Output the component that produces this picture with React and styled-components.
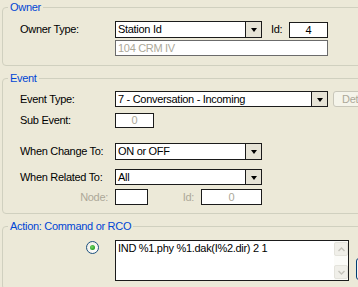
import React from 'react';
import styled, { createGlobalStyle } from 'styled-components';

const GlobalStyle = createGlobalStyle`
  html, body {
    margin: 0;
    padding: 0;
    background: #ece9d8;
  }
  body {
    font-family: 'Liberation Sans', Arial, sans-serif;
    font-size: 11px;
    letter-spacing: -0.3px;
    color: #000;
    overflow: hidden;
  }
`;

const Page = styled.div`
  width: 358px;
  height: 287px;
  overflow: hidden;
  box-sizing: border-box;
  padding: 1px 0 0 2px;
`;

const Group = styled.fieldset`
  width: 400px;
  min-width: 0;
  margin: ${(p) => p.$mt || 0}px 0 0 0;
  padding: 0;
  border: 1px solid #d0d0bf;
  border-radius: 4px;
  box-sizing: border-box;
`;

const Legend = styled.legend`
  margin-left: 5px;
  padding: 0 2px;
  line-height: 13px;
  color: #0046d5;
`;

const Body = styled.div`
  padding: ${(p) => p.$pt}px 0 ${(p) => p.$pb}px 17px;
`;

const Row = styled.div`
  display: flex;
  align-items: ${(p) => (p.$top ? 'flex-start' : 'center')};
  margin-top: ${(p) => p.$mt || 0}px;
`;

const Label = styled.span`
  flex: none;
  width: ${(p) => p.$w || 95}px;
  margin-left: ${(p) => p.$ml || 0}px;
  box-sizing: border-box;
  padding-right: ${(p) => (p.$right ? 7 : 0)}px;
  text-align: ${(p) => (p.$right ? 'right' : 'left')};
  line-height: 13px;
  color: ${(p) => (p.$disabled ? '#aca899' : '#000')};
  white-space: nowrap;
`;

const Combo = styled.div`
  flex: none;
  display: flex;
  width: ${(p) => p.$w}px;
  height: ${(p) => p.$h || 16}px;
  box-sizing: border-box;
  border: 1px solid #1b1b1b;
  background: #fff;
`;

const ComboText = styled.span`
  flex: 1;
  padding-left: 2px;
  line-height: ${(p) => p.$lh || 14}px;
  white-space: nowrap;
  overflow: hidden;
`;

const ComboArrow = styled.div`
  flex: none;
  width: 15px;
  display: flex;
  align-items: center;
  justify-content: center;
  border-left: 1px solid #1b1b1b;
  background: #e6e3d6;

  &::after {
    content: '';
    border-left: 3px solid transparent;
    border-right: 3px solid transparent;
    border-top: 4px solid #000;
    margin-top: 1px;
  }
`;

const Field = styled.div`
  flex: none;
  width: ${(p) => p.$w}px;
  height: ${(p) => p.$h || 16}px;
  box-sizing: border-box;
  border: 1px solid ${(p) => (p.$soft ? '#6b6b6b' : '#1b1b1b')};
  background: #fff;
  padding: 0 2px;
  line-height: ${(p) => (p.$h || 16) - 2}px;
  text-align: ${(p) => (p.$center ? 'center' : 'left')};
  color: ${(p) => (p.$disabled ? '#aca899' : '#000')};
  white-space: nowrap;
  overflow: hidden;
`;

const PushButton = styled.div`
  flex: none;
  width: ${(p) => p.$w}px;
  height: ${(p) => p.$h}px;
  margin-left: ${(p) => p.$ml || 0}px;
  margin-top: ${(p) => p.$mt || 0}px;
  box-sizing: border-box;
  border: 1px solid ${(p) => (p.$disabled ? '#c9c7ba' : '#003c74')};
  border-radius: 3px;
  background: ${(p) => (p.$disabled ? '#f5f4ea' : '#f4f3ee')};
  color: #aca899;
  padding-left: 8px;
  line-height: ${(p) => p.$h - 2}px;
`;

const RadioCell = styled.div`
  flex: none;
  width: 95px;
  box-sizing: border-box;
  padding: 1px 0 0 66px;
`;

const Radio = styled.div`
  width: 13px;
  height: 13px;
  box-sizing: border-box;
  border-radius: 50%;
  border: 1px solid #1c5180;
  background: radial-gradient(circle at 65% 65%, #fff 0%, #eceae0 100%);
  display: flex;
  align-items: center;
  justify-content: center;

  &::after {
    content: '';
    width: 5px;
    height: 5px;
    border-radius: 50%;
    background: radial-gradient(circle at 40% 40%, #7ad46a 0%, #21a121 70%);
  }
`;

const TextArea = styled.div`
  flex: none;
  display: flex;
  width: 234px;
  height: 41px;
  box-sizing: border-box;
  border: 1px solid #1b1b1b;
  background: #fff;
`;

const AreaText = styled.div`
  flex: 1;
  padding: 1px 2px;
  line-height: 13px;
  white-space: nowrap;
`;

const ScrollBar = styled.div`
  flex: none;
  width: 14px;
  display: flex;
  flex-direction: column;
  justify-content: space-between;
  background: #fbfbf8;
  padding: 1px 0;
`;

const ScrollButton = styled.div`
  height: 14px;
  box-sizing: border-box;
  border: 1px solid #e4e3dc;
  border-radius: 2px;
  background: #f0efe9;
  display: flex;
  align-items: center;
  justify-content: center;
`;

const Chevron = ({ up }) => (
  <svg width="7" height="5" viewBox="0 0 7 5">
    <path
      d={up ? 'M0.5 4 L3.5 1 L6.5 4' : 'M0.5 1 L3.5 4 L6.5 1'}
      fill="none"
      stroke="#c4c3bb"
      strokeWidth="1.4"
    />
  </svg>
);

const Combobox = ({ w, h, children }) => (
  <Combo $w={w} $h={h}>
    <ComboText $lh={(h || 16) - 2}>{children}</ComboText>
    <ComboArrow />
  </Combo>
);

export default function App() {
  return (
    <>
      <GlobalStyle />
      <Page>
        <Group>
          <Legend>Owner</Legend>
          <Body $pt={7} $pb={9}>
            <Row>
              <Label>Owner Type:</Label>
              <Combobox w={147} h={17}>Station Id</Combobox>
              <Label $w={18} $ml={9}>Id:</Label>
              <Field $w={39} $center>4</Field>
            </Row>
            <Row $mt={2}>
              <Label />
              <Field $w={213} $soft $disabled>104 CRM IV</Field>
            </Row>
          </Body>
        </Group>

        <Group $mt={6}>
          <Legend>Event</Legend>
          <Body $pt={6} $pb={8}>
            <Row>
              <Label>Event Type:</Label>
              <Combobox w={213}>7 - Conversation - Incoming</Combobox>
              <PushButton $w={50} $h={16} $ml={5} $disabled>Details</PushButton>
            </Row>
            <Row $mt={6}>
              <Label>Sub Event:</Label>
              <Field $w={39} $h={15} $center $disabled>0</Field>
            </Row>
            <Row $mt={15}>
              <Label>When Change To:</Label>
              <Combobox w={147} h={17}>ON or OFF</Combobox>
            </Row>
            <Row $mt={9}>
              <Label>When Related To:</Label>
              <Combobox w={147}>All</Combobox>
            </Row>
            <Row $mt={4}>
              <Label $right $disabled>Node:</Label>
              <Field $w={33} />
              <Label $w={53} $right $disabled>Id:</Label>
              <Field $w={61} $center $disabled>0</Field>
            </Row>
          </Body>
        </Group>

        <Group $mt={6}>
          <Legend>Action: Command or RCO</Legend>
          <Body $pt={7} $pb={8}>
            <Row $top>
              <RadioCell>
                <Radio />
              </RadioCell>
              <TextArea>
                <AreaText>IND %1.phy %1.dak(I%2.dir) 2 1</AreaText>
                <ScrollBar>
                  <ScrollButton>
                    <Chevron up />
                  </ScrollButton>
                  <ScrollButton>
                    <Chevron />
                  </ScrollButton>
                </ScrollBar>
              </TextArea>
              <PushButton $w={30} $h={22} $ml={7} $mt={18} />
            </Row>
          </Body>
        </Group>
      </Page>
    </>
  );
}
